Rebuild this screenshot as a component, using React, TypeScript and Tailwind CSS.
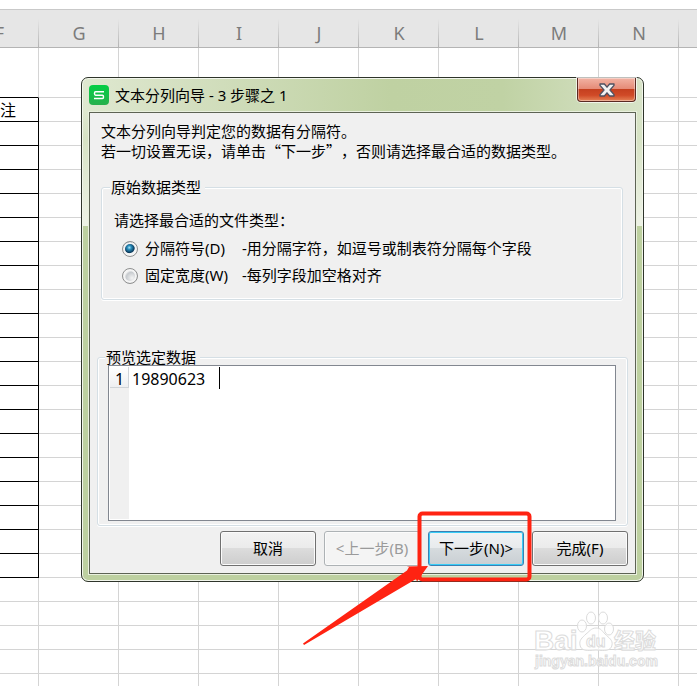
import type { ReactNode } from 'react';

const COLUMNS = ['G', 'H', 'I', 'J', 'K', 'L', 'M', 'N'];
const ROWS = Array.from({ length: 26 }, (_, i) => i);

// rows of the sheet whose F cell carries a black border
const isBoxed = (row: number) => row >= 1 && row <= 20;

function Sheet() {
    return (
        <table className="w-full table-fixed border-separate border-spacing-0">
            <colgroup>
                <col className="w-[39px]" />
                {COLUMNS.map((c) => (
                    <col key={c} className="w-20" />
                ))}
                <col />
            </colgroup>
            <thead>
                <tr className="h-[39px] bg-[#e6e6e6] text-lg text-[#7c7c7c]">
                    {['F', ...COLUMNS, ''].map((c) => (
                        <th
                            key={c}
                            scope="col"
                            className="relative border-y border-t-[#c9c9c9] border-b-[#b4b4b4] p-0 pt-2 font-normal leading-7"
                        >
                            {c === 'F' ? <span className="-ml-10">F</span> : c}
                            {c && (
                                <span className="absolute right-0 bottom-0 h-7 w-px bg-linear-to-b from-[#e6e6e6] to-[#b4b4b4]" />
                            )}
                        </th>
                    ))}
                </tr>
            </thead>
            <tbody>
                {ROWS.map((row) => (
                    <tr key={row} className={row === 0 ? 'h-[50px]' : 'h-6'}>
                        <td
                            className={`overflow-hidden border-b p-0 text-base leading-5 ${
                                isBoxed(row)
                                    ? 'border-r border-black'
                                    : row === 0
                                      ? 'border-r border-r-[#d4d4d4] border-b-black'
                                      : 'border-r border-[#d4d4d4]'
                            }`}
                        >
                            {row === 1 && '注'}
                        </td>
                        {COLUMNS.map((c) => (
                            <td key={c} className="border-r border-b border-[#d4d4d4] p-0" />
                        ))}
                        <td className="border-b border-[#d4d4d4] p-0" />
                    </tr>
                ))}
            </tbody>
        </table>
    );
}

interface GroupProps {
    title: string;
    className: string;
    legendClassName: string;
    children: ReactNode;
}

function Group({ title, className, legendClassName, children }: GroupProps) {
    return (
        <fieldset
            className={`min-w-0 rounded-[3px] border border-[#d5dfe5] shadow-[inset_0_0_0_1px_#fff,0_1px_0_#fff] ${className}`}
        >
            <legend className={`bg-[#f0f0f0] pr-1 leading-4 ${legendClassName}`}>{title}</legend>
            {children}
        </fieldset>
    );
}

interface ChoiceProps {
    label: string;
    hint: string;
    checked?: boolean;
}

function Choice({ label, hint, checked }: ChoiceProps) {
    return (
        <label className="flex h-[27px] items-center">
            <input
                type="radio"
                name="kind"
                defaultChecked={checked}
                className="mr-[7px] size-4 shrink-0 appearance-none rounded-full border border-[#8e8f8f] bg-[radial-gradient(circle_at_65%_65%,#f4f4f4_0,#c6cace_6px,#f4f4f4_8px)] shadow-[inset_0_0_0_2px_#f4f4f4] checked:bg-[radial-gradient(circle_at_45%_40%,#a9e4f7_0,#2a8fbd_2px,#0b3a5c_5px,#f4f4f4_6px)]"
            />
            <span className="w-[97px] shrink-0">{label}</span>
            <span className="whitespace-nowrap">{hint}</span>
        </label>
    );
}

type Tone = 'normal' | 'disabled' | 'default';

const TONES: Record<Tone, string> = {
    normal: 'border-[#707070] bg-[linear-gradient(#f3f3f3,#ebebeb_48%,#dcdcdc_50%,#cdcdcd)] shadow-[inset_0_0_0_1px_#fbfbfb]',
    disabled: 'border-[#adb2b5] bg-[#f4f4f4] text-[#9a9a9a] shadow-[inset_0_0_0_1px_#fbfbfb]',
    default: 'border-[#3c7fb1] bg-[linear-gradient(#f1f3f4,#e8ebed_48%,#d6dbde_50%,#c9cfd3)] shadow-[inset_0_0_0_1px_#38cdf7]',
};

function WizardButton({ tone = 'normal', children }: { tone?: Tone; children: ReactNode }) {
    return (
        <button
            type="button"
            disabled={tone === 'disabled'}
            className={`h-[35px] w-24 rounded-[3px] border whitespace-nowrap ${TONES[tone]}`}
        >
            {children}
        </button>
    );
}

function Logo() {
    return (
        <svg viewBox="0 0 20 20" className="size-5">
            <defs>
                <linearGradient id="logo" x1="0" y1="0" x2="0" y2="1">
                    <stop offset="0" stopColor="#04cf45" />
                    <stop offset="1" stopColor="#27b04c" />
                </linearGradient>
            </defs>
            <rect width="20" height="20" rx="4" fill="url(#logo)" />
            <path d="M15 6.8H6.6q-1.1 0-1.1 1.7t1.1 1.7h6.8q1.1 0 1.1 1.7t-1.1 1.7H5" fill="none" stroke="#fff" strokeWidth="1.5" />
        </svg>
    );
}

function CloseButton() {
    return (
        <button
            type="button"
            aria-label="关闭"
            className="flex h-6 w-[59px] items-center justify-center rounded-b-[4px] border border-t-0 border-[#5a2a22] bg-[linear-gradient(#f2b3a4,#e58a76_48%,#c5401f_50%,#d04a27_75%,#e58256)] shadow-[0_0_0_1px_#ffffffb0,inset_0_0_0_1px_#ffffff60]"
        >
            <svg viewBox="0 0 16 14" className="h-[14px] w-4">
                <path
                    d="M1 1h4.4L8 4.2 10.6 1H15v1.4L11 7l4 4.600V13h-4.400L8 9.800 5.400 13H1v-1.400L5 7 1 2.400z"
                    fill="#f2f2f2"
                    stroke="#4d5060"
                    strokeWidth="1.300"
                    strokeLinejoin="round"
                />
            </svg>
        </button>
    );
}

function Wizard() {
    return (
        <section
            aria-label="文本分列向导"
            className="absolute top-[77px] left-[81px] w-[563px] rounded-[7px] border border-[#2f352b] bg-[linear-gradient(to_bottom,transparent_148px,#bdd0a0_148px),linear-gradient(to_bottom,transparent_34px,#d6e2c4_60px,#eef2e6_148px),linear-gradient(to_right,#dfe8d0_0,#d3dfbf_20%,#bfd1a2_55%,#c0d2a4_75%,#d8e3c8_100%)] px-[7px] pb-[7px] text-[15px] shadow-[inset_0_0_0_1px_#f2f6ec]"
        >
            <header className="flex h-[34px] items-start">
                <div className="flex h-[34px] flex-1 items-center gap-[6px]">
                    <Logo />
                    <h1 className="leading-5">文本分列向导 - 3 步骤之 1</h1>
                </div>
                <CloseButton />
            </header>
            <div className="border border-[#5d6354] bg-[#f0f0f0] px-[7px] pt-2 pb-[7px] shadow-[0_0_0_1px_#e9f0de]">
                <p className="pl-1 font-['Noto_Sans_CJK_SC',sans-serif] leading-5 [text-spacing-trim:space-all]">
                    文本分列向导判定您的数据有分隔符。
                    <br />
                    若一切设置无误，请单击“下一步”，否则请选择最合适的数据类型。
                </p>
                <Group title="原始数据类型" className="mt-[18px] mr-[5px] ml-1 px-3 pb-[10px]" legendClassName="-ml-1 pl-[1px]">
                    <p className="mt-[15px] mb-[5px] leading-5">请选择最合适的文件类型：</p>
                    <div className="pl-2">
                        <Choice label="分隔符号(D)" hint="-用分隔字符，如逗号或制表符分隔每个字段" checked />
                        <Choice label="固定宽度(W)" hint="-每列字段加空格对齐" />
                    </div>
                </Group>
                <Group title="预览选定数据" className="mt-[49px] px-[10px] pb-1" legendClassName="-ml-[3px] pl-[1px]">
                    <div className="mr-px flex h-[156px] border border-[#828790] bg-white p-px text-base leading-6">
                        <div className="w-[19px] bg-[#f0f0f0]">
                            <div className="h-[21px] border-r border-b border-[#d0d4d8] bg-linear-to-b from-white to-[#eeeff1] pl-[5px]">1</div>
                        </div>
                        <div className="pl-[3px]">19890623</div>
                        <div className="ml-[14px] h-[22px] w-px bg-black" />
                    </div>
                </Group>
                <div className="mt-[5px] flex justify-end gap-2">
                    <WizardButton>取消</WizardButton>
                    <WizardButton tone="disabled">&lt;上一步(B)</WizardButton>
                    <WizardButton tone="default">下一步(N)&gt;</WizardButton>
                    <WizardButton>完成(F)</WizardButton>
                </div>
            </div>
        </section>
    );
}

function Callout() {
    return (
        <svg viewBox="0 0 240 144" className="pointer-events-none absolute top-[506px] left-[298px] h-36 w-60">
            <rect x="121.500" y="7.500" width="110" height="66" rx="3" fill="none" stroke="#ff2312" strokeWidth="4" />
            <path d="M5 137.500 109 64.500 111 61 108.500 60.500 130 60 119 75.500 118 73 6 139z" fill="#ff2312" />
        </svg>
    );
}

function Watermark() {
    return (
        <svg
            viewBox="0 0 140 70"
            className="pointer-events-none absolute top-[604px] left-[526px] h-[70px] w-[140px]"
            fill="#fff"
            fillOpacity="0.7"
            stroke="#dcdcdc"
        >
            <g fontFamily="Liberation Sans, Noto Sans CJK SC, sans-serif" fontWeight="bold">
                <text x="8" y="46" fontSize="28">Bai</text>
                <ellipse cx="56" cy="22" rx="4.500" ry="6" />
                <ellipse cx="65" cy="14" rx="4.500" ry="6" />
                <ellipse cx="77" cy="14" rx="4.500" ry="6" />
                <ellipse cx="83" cy="25" rx="4.500" ry="6" />
                <path d="M70 24c-5 0-7 4-10 6-4 4-7 6-6 11 1 6 7 6 16 5 9 1 15 1 16-5 1-5-3-7-7-11-3-3-4-6-9-6z" />
                <text x="60" y="43" fontSize="16">du</text>
                <text x="88" y="44" fontSize="21">经验</text>
                <text x="9" y="62" fontSize="14">jingyan.baidu.com</text>
            </g>
        </svg>
    );
}

export default function App() {
    return (
        <main
            lang="zh-CN"
            className="relative h-screen overflow-hidden bg-white pt-[9px] font-['Noto_Sans','Noto_Sans_CJK_SC',sans-serif] text-black"
        >
            <Sheet />
            <Wizard />
            <Callout />
            <Watermark />
        </main>
    );
}
